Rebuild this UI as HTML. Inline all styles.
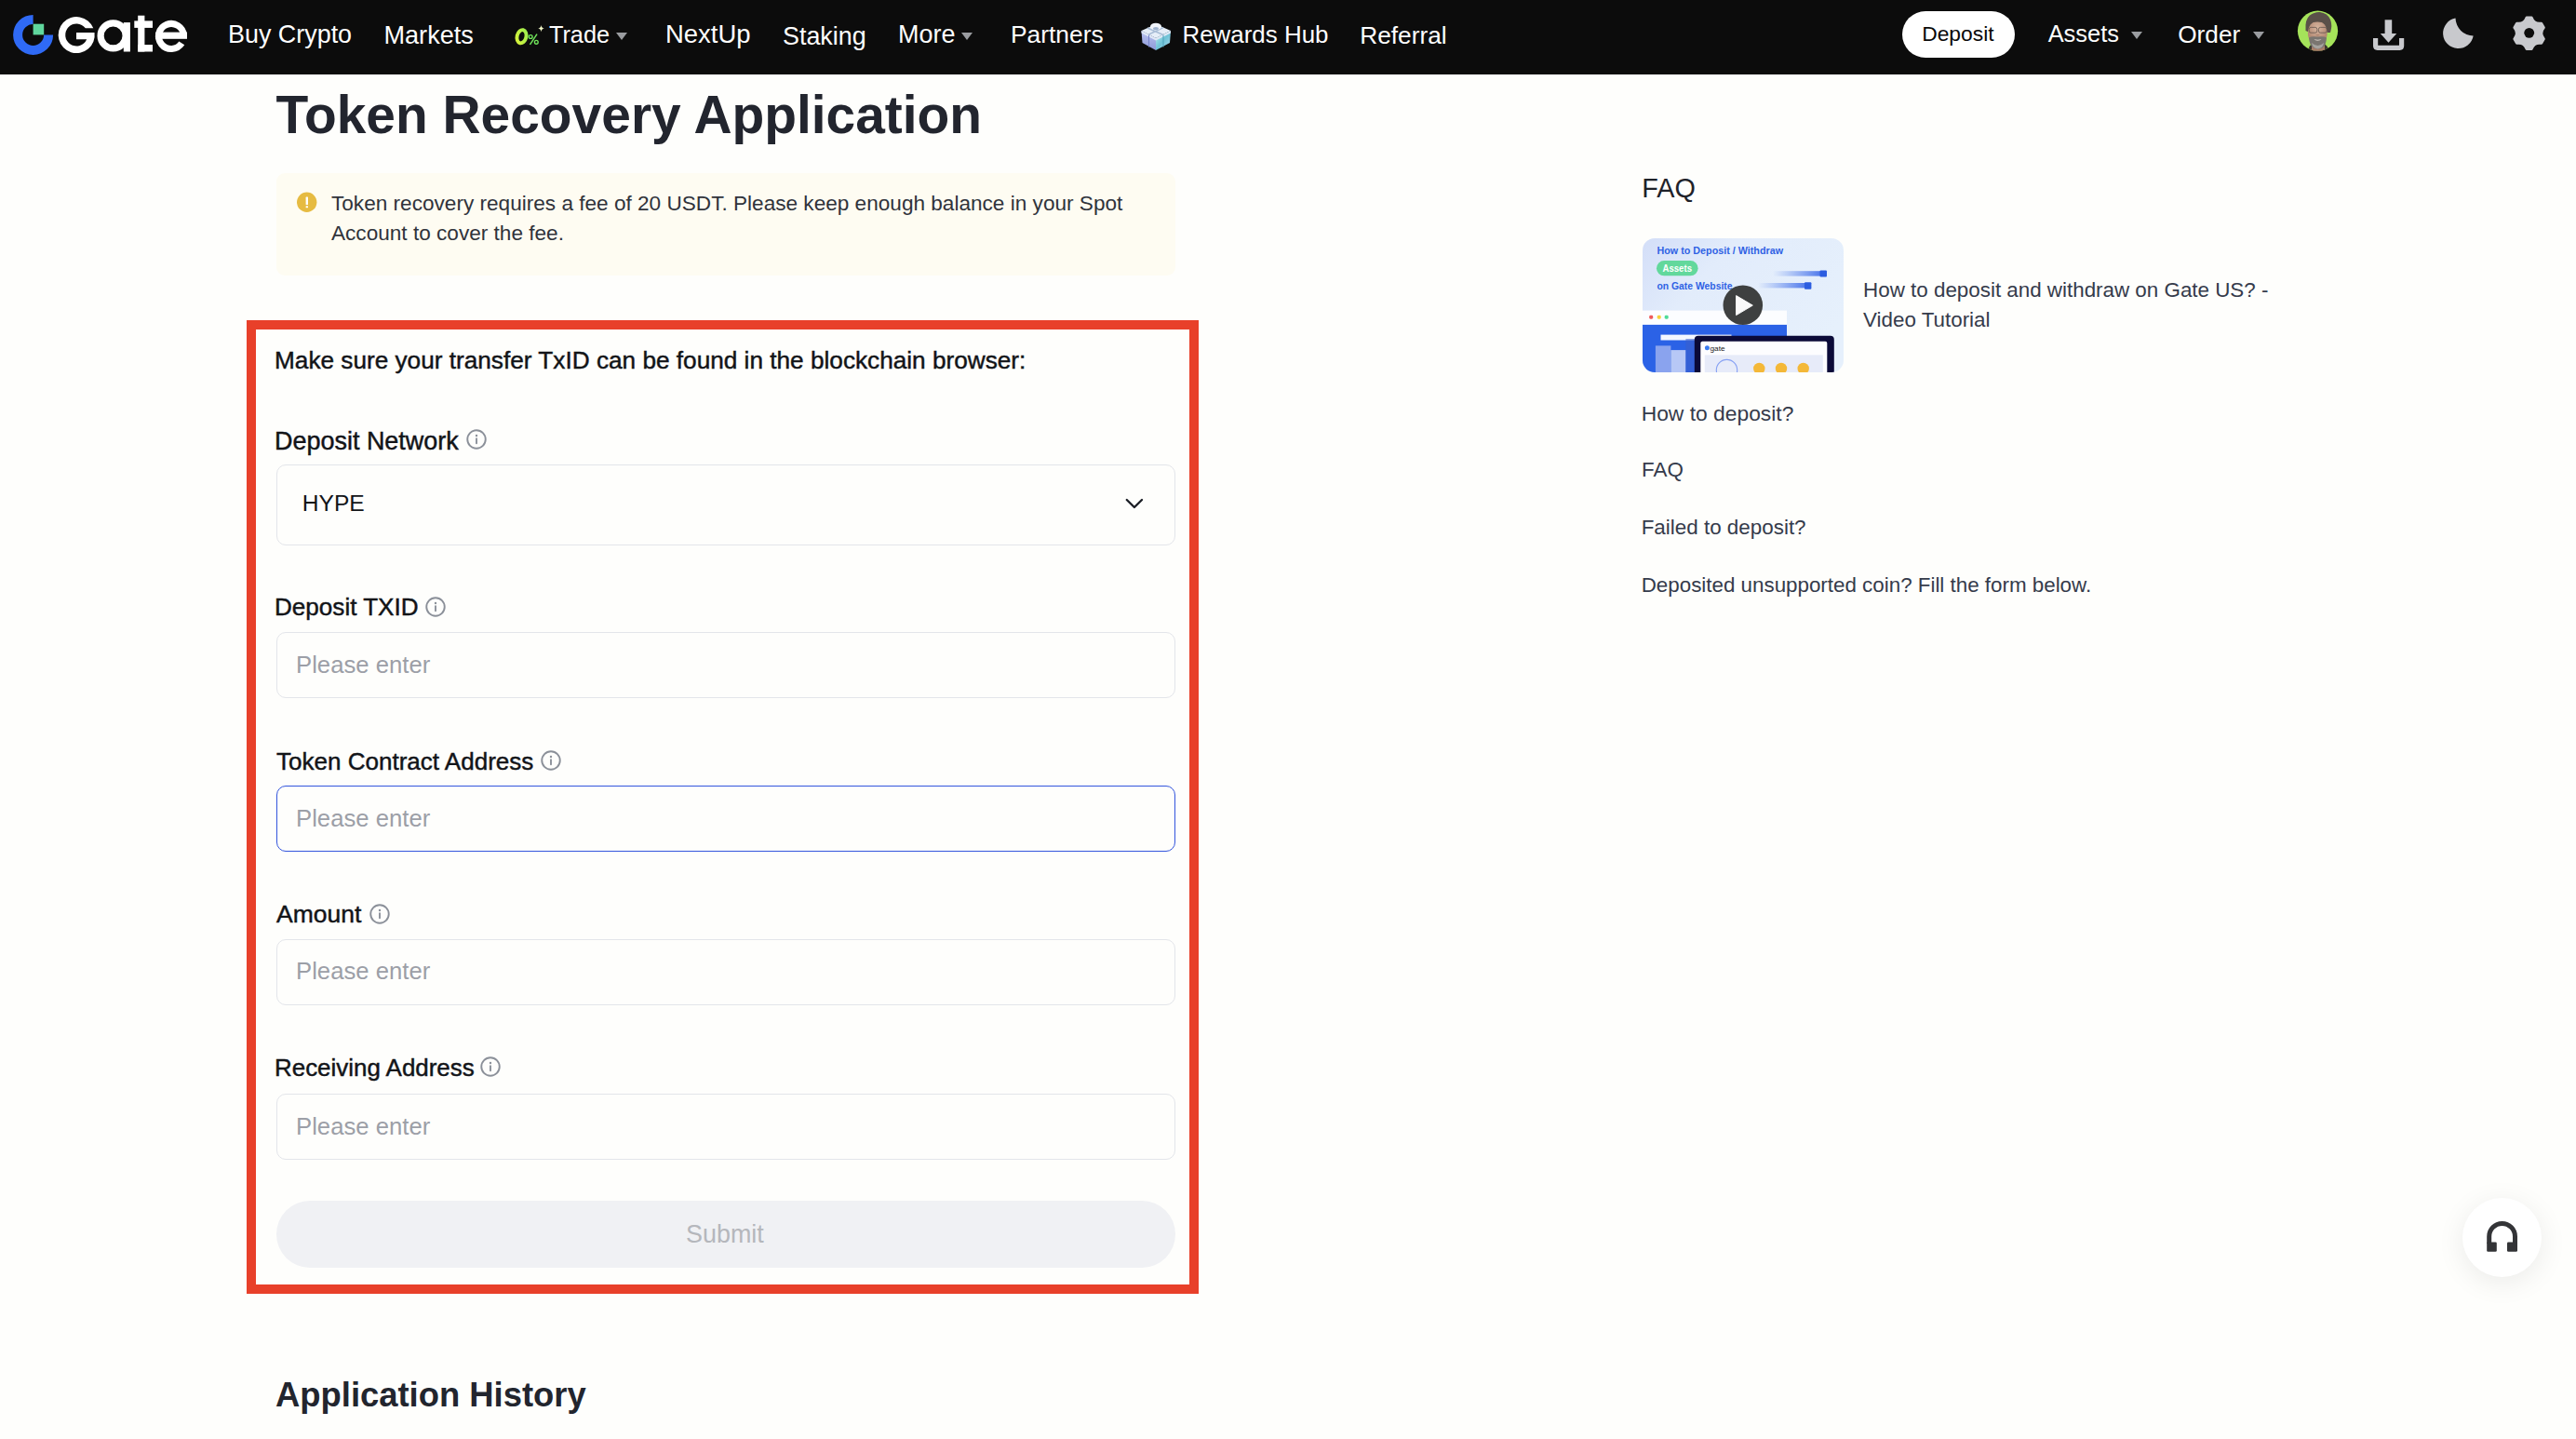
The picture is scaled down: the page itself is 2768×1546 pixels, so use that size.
<!DOCTYPE html>
<html>
<head>
<meta charset="utf-8">
<style>
html,body{margin:0;padding:0;}
body{width:2768px;height:1546px;overflow:hidden;position:relative;background:#fefefc;font-family:"Liberation Sans",sans-serif;}
.a{position:absolute;white-space:nowrap;line-height:1;}
#nav{position:absolute;left:0;top:0;width:2768px;height:80px;background:#0c0c0c;}
.nt{color:#fff;font-size:26.5px;}
.caret{position:absolute;width:0;height:0;border-left:6px solid transparent;border-right:6px solid transparent;border-top:8px solid #9a9ca0;}
.lbl{color:#121418;font-size:26px;-webkit-text-stroke:0.45px #121418;}
.inp{position:absolute;left:297px;width:966px;box-sizing:border-box;border:1.2px solid #e3e5ea;border-radius:10px;}
.ph{color:#9c9fa7;font-size:25.7px;}
.faq{color:#353b4b;font-size:22.5px;}
.info{position:absolute;width:21px;height:21px;}
</style>
</head>
<body>
<div id="nav">
  <!-- logo -->
  <svg class="a" style="left:0;top:0" width="220" height="80" viewBox="0 0 220 80">
    <path d="M35.6 15.9 A21.5 21.5 0 1 0 57.1 37.4 L47.1 37.4 A11.5 11.5 0 1 1 35.6 25.9 Z" fill="#2f6af5"/>
    <rect x="35.6" y="25.7" width="11.6" height="11.7" fill="#5fd69d"/>
    <g fill="#fff">
      <path d="M100.3 30.3 A19.5 19.5 0 1 0 101.54 35 L82 35 L82 42.3 L93.2 42.3 A12 12 0 1 1 91.8 30.3 Z"/>
      <circle cx="121.6" cy="38.45" r="13.5" fill="none" stroke="#fff" stroke-width="7.2"/>
      <rect x="132.8" y="24.1" width="7.1" height="31.4"/>
      <rect x="148.2" y="16.7" width="7.2" height="38.8"/>
      <rect x="144.3" y="22.4" width="19.7" height="7.5"/>
      <rect x="148.2" y="48.1" width="15.8" height="7.4"/>
      <path d="M197.5 38.2 A13.5 13.5 0 1 0 195.3 46.4" fill="none" stroke="#fff" stroke-width="7.1"/>
      <rect x="167.2" y="34.6" width="33.8" height="7.2"/>
    </g>
  </svg>
  <!-- 0% -->
  <svg class="a" style="left:550px;top:24px" width="40" height="28" viewBox="0 0 40 28">
    <defs><linearGradient id="zg" x1="0" y1="1" x2="1" y2="0"><stop offset="0" stop-color="#d9f23a"/><stop offset="1" stop-color="#9cef4f"/></linearGradient></defs>
    <ellipse cx="10.5" cy="15.25" rx="4.9" ry="7.2" transform="rotate(14 10.5 15.25)" fill="none" stroke="url(#zg)" stroke-width="3.9"/>
    <path d="M19.5 23.8 L27 12.6" stroke="#6fe35a" stroke-width="1.5"/>
    <circle cx="20.2" cy="15.5" r="1.9" fill="none" stroke="#6fe35a" stroke-width="1.4"/>
    <circle cx="26.3" cy="21.3" r="1.9" fill="none" stroke="#6fe35a" stroke-width="1.4"/>
    <path d="M31.5 3 Q32 6.2 34.8 6.6 Q32 7 31.5 10.2 Q31 7 28.2 6.6 Q31 6.2 31.5 3Z" fill="#f2f7c8"/>
  </svg>
  <div id="t_buy" class="a nt" style="left:245.0px;top:24.4px;font-size:26.91px;">Buy Crypto</div>
  <div id="t_markets" class="a nt" style="left:412.5px;top:24.4px;font-size:27.08px;">Markets</div>
  <div id="t_trade" class="a nt" style="left:589.9px;top:25.4px;font-size:25.35px;">Trade</div>
  <div class="caret" style="left:662px;top:35px;"></div>
  <div id="t_nextup" class="a nt" style="left:715.0px;top:23.4px;font-size:27.44px;">NextUp</div>
  <div id="t_staking" class="a nt" style="left:841.0px;top:25.5px;font-size:26.88px;">Staking</div>
  <div id="t_more" class="a nt" style="left:965.0px;top:24.4px;font-size:26.96px;">More</div>
  <div class="caret" style="left:1033px;top:35px;"></div>
  <div id="t_partners" class="a nt" style="left:1086.0px;top:23.5px;font-size:26.36px;">Partners</div>
  <div id="t_rewards" class="a nt" style="left:1270.5px;top:24.6px;font-size:25.91px;">Rewards Hub</div>
  <div id="t_referral" class="a nt" style="left:1461.2px;top:24.5px;font-size:26.28px;">Referral</div>

  <div class="a" style="left:2044px;top:12px;width:121px;height:50px;border-radius:25px;background:#fff;"></div>
  <div id="t_deposit" class="a" style="left:2065.2px;top:25.0px;color:#0a0a0a;font-size:22.82px;">Deposit</div>
  <div id="t_assets" class="a nt" style="left:2200.7px;top:24.0px;font-size:25.40px;">Assets</div>
  <div class="caret" style="left:2290px;top:34px;"></div>
  <div id="t_order" class="a nt" style="left:2340.2px;top:23.6px;font-size:26.22px;">Order</div>
  <div class="caret" style="left:2421px;top:34px;"></div>

  <!-- gift -->
  <svg class="a" style="left:1224px;top:22px" width="36" height="33" viewBox="0 0 36 33">
    <defs>
      <linearGradient id="gl" x1="0" y1="0" x2="0" y2="1"><stop offset="0" stop-color="#b9c2f0"/><stop offset="1" stop-color="#8e9ad8"/></linearGradient>
      <linearGradient id="gr" x1="0" y1="0" x2="1" y2="1"><stop offset="0" stop-color="#c9f2f2"/><stop offset="0.5" stop-color="#6fc3d6"/><stop offset="1" stop-color="#a9d8ee"/></linearGradient>
    </defs>
    <polygon points="2.5,11 18,4 34,11 18,19" fill="#e6eef8"/>
    <polygon points="2.5,11 18,19 18,32 3.5,24" fill="url(#gl)"/>
    <polygon points="18,19 34,11 33,24 18,32" fill="url(#gr)"/>
    <polygon points="2.5,11 18,19 34,11 34,13.5 18,21.5 2.5,13.5" fill="#dfe8f6"/>
    <path d="M10.5 15.5 L10.5 28.5" stroke="#7583c9" stroke-width="1"/>
    <path d="M26 15.5 L26 28.5" stroke="#4f9fb8" stroke-width="1"/>
    <path d="M9 8 L26 15.5 M26 7.5 L10.5 15" stroke="#a9bdd6" stroke-width="1.6"/>
    <ellipse cx="18" cy="6.5" rx="6" ry="3.8" fill="#f2f5fb"/>
    <ellipse cx="18" cy="8.5" rx="3" ry="1.6" fill="#9fb3cf"/>
  </svg>
  <!-- avatar -->
  <svg class="a" style="left:2468px;top:11px" width="45" height="45" viewBox="0 0 45 45">
    <defs><clipPath id="av"><circle cx="22.5" cy="22.2" r="21.6"/></clipPath>
    <radialGradient id="skin" cx="0.5" cy="0.3" r="0.7"><stop offset="0" stop-color="#d6b59f"/><stop offset="1" stop-color="#a87a64"/></radialGradient></defs>
    <circle cx="22.5" cy="22.2" r="21.6" fill="#a5e35a"/>
    <g clip-path="url(#av)">
      <path d="M12 46 Q12 38 17 36 L29 36 Q34 38 35 46 Z" fill="#3c382e"/>
      <path d="M16 36 Q22 44 30 36 L30 46 L16 46 Z" fill="#a97d68"/>
      <path d="M9.5 22 Q8.5 10 14 5.5 Q19 1.5 25 2 Q33 3 36 10 Q38.5 16 36 24 L31 24 L14 24 Z" fill="#5a5049"/>
      <ellipse cx="22.3" cy="24.5" rx="10.4" ry="13" fill="url(#skin)"/>
      <path d="M12 19 Q12.5 12 16.5 11 Q22 9.5 28 11 Q33 12.5 33.5 19 Q31 13.5 27 13 Q22 12 17.5 13 Q13.5 14 12 19 Z" fill="#5a5049"/>
      <path d="M13 29.5 Q13.5 38 18 40.5 Q22.5 42.5 27.5 40.5 Q31.5 38 32 29.5 Q29 27.5 22.3 28.5 Q15.5 27.5 13 29.5 Z" fill="#7a7570"/>
      <path d="M16 35 Q22.5 41 29 35 Q28.5 40.5 22.5 41.5 Q16.5 40.5 16 35Z" fill="#a6a39f"/>
      <path d="M18.5 31 Q22.5 32.4 26.5 31 Q25.5 32.8 22.4 32.8 Q19.4 32.8 18.5 31Z" fill="#d9cfc8"/>
      <path d="M20 26 Q22.3 29 24.6 26" fill="#b08670"/>
      <rect x="13.2" y="18.4" width="8.6" height="5.8" rx="2" fill="none" stroke="#5a4f48" stroke-width="0.9" opacity="0.8"/>
      <rect x="23.4" y="18.4" width="8.8" height="5.8" rx="2" fill="none" stroke="#5a4f48" stroke-width="0.9" opacity="0.8"/>
    </g>
  </svg>
  <!-- download -->
  <svg class="a" style="left:2548px;top:19px" width="38" height="38" viewBox="0 0 38 38">
    <path d="M4.6 21.9 V30.3 Q4.6 32.3 6.6 32.3 H30.6 Q32.6 32.3 32.6 30.3 V21.9" fill="none" stroke="#c8c9cd" stroke-width="5.2"/>
    <rect x="14.6" y="2.3" width="7.6" height="15" fill="#c8c9cd"/>
    <polygon points="9.8,16.9 27.3,16.9 18.5,26.8" fill="#c8c9cd"/>
  </svg>
  <!-- moon -->
  <svg class="a" style="left:2622px;top:16px" width="40" height="40" viewBox="0 0 40 40">
    <path d="M16.5 3.58 A16.4 16.4 0 1 0 35.66 22.5 A19.5 19.5 0 0 1 16.5 3.58 Z" fill="#c8c9cd"/>
  </svg>
  <!-- gear -->
  <svg class="a" style="left:2697px;top:15px" width="41" height="41" viewBox="0 0 41 41">
    <path fill="#c8c9cd" stroke="#c8c9cd" stroke-width="3" stroke-linejoin="round" d="M18.00 4.05 L23.20 4.05 Q25.92 11.54 33.76 10.15 L36.36 14.65 Q31.24 20.75 36.36 26.85 L33.76 31.35 Q25.92 29.96 23.20 37.45 L18.00 37.45 Q15.28 29.96 7.44 31.35 L4.84 26.85 Q9.96 20.75 4.84 14.65 L7.44 10.15 Q15.28 11.54 18.00 4.05 Z"/>
    <circle cx="20.7" cy="20.35" r="5.4" fill="#0c0c0c"/>
  </svg>
</div>

<!-- title -->
<div id="t_title" class="a" style="left:296.4px;top:95.0px;color:#22252e;font-size:56.90px;font-weight:bold;">Token Recovery Application</div>

<!-- alert -->
<div class="a" style="left:297px;top:186px;width:966px;height:110px;background:#fefcf2;border-radius:9px;"></div>
<svg class="a" style="left:317px;top:205px" width="26" height="26" viewBox="0 0 26 26"><circle cx="12.7" cy="12.2" r="10.7" fill="#e6bb42"/><rect x="11.6" y="6.6" width="2.4" height="8.4" rx="0.6" fill="#fff"/><rect x="11.6" y="16.3" width="2.4" height="1.9" rx="0.5" fill="#fff"/></svg>
<div id="t_alert" class="a" style="left:356.0px;top:203.0px;color:#30333b;font-size:22.60px;line-height:31.6px;">Token recovery requires a fee of 20 USDT. Please keep enough balance in your Spot<br>Account to cover the fee.</div>

<!-- red frame -->
<div class="a" style="left:265px;top:344px;width:1023px;height:1046px;box-sizing:border-box;border:10px solid #e8402a;"></div>

<div id="t_make" class="a lbl" style="left:295.0px;top:373.6px;font-size:26.20px;">Make sure your transfer TxID can be found in the blockchain browser:</div>

<div id="t_depnet" class="a lbl" style="left:295.0px;top:461.0px;font-size:26.96px;">Deposit Network</div>
<div class="inp" style="top:499px;height:87px;"></div>
<div id="t_hype" class="a" style="left:324.8px;top:529.4px;color:#121418;font-size:24.60px;">HYPE</div>

<div id="t_txid" class="a lbl" style="left:295.0px;top:639.2px;font-size:26.09px;">Deposit TXID</div>
<div class="inp" style="top:679px;height:71px;"></div>
<div id="t_ph1" class="a ph" style="left:318.0px;top:701.8px;font-size:25.70px;">Please enter</div>

<div id="t_tca" class="a lbl" style="left:297.0px;top:804.5px;font-size:26.04px;">Token Contract Address</div>
<div class="inp" style="top:844px;height:71px;border-color:#3355dd;"></div>
<div id="t_ph2" class="a ph" style="left:318.0px;top:866.8px;font-size:25.70px;">Please enter</div>

<div id="t_amount" class="a lbl" style="left:297.0px;top:968.9px;font-size:26.51px;">Amount</div>
<div class="inp" style="top:1009px;height:71px;"></div>
<div id="t_ph3" class="a ph" style="left:318.0px;top:1031.4px;font-size:25.70px;">Please enter</div>

<div id="t_recv" class="a lbl" style="left:295.0px;top:1135.0px;font-size:25.93px;">Receiving Address</div>
<div class="inp" style="top:1175px;height:71px;"></div>
<div id="t_ph4" class="a ph" style="left:318.0px;top:1198.0px;font-size:25.70px;">Please enter</div>

<div class="a" style="left:297px;top:1290px;width:966px;height:72px;border-radius:36px;background:#f0f1f4;"></div>
<div id="t_submit" class="a" style="left:737.0px;top:1313.0px;color:#b5b7bc;font-size:26.93px;">Submit</div>

<div id="t_apphist" class="a" style="left:296.0px;top:1481.0px;color:#22252e;font-size:36.41px;font-weight:bold;">Application History</div>

<!-- info icons -->
<svg class="a" style="left:499.8px;top:459.8px" width="24" height="24" viewBox="0 0 24 24"><circle cx="12" cy="12" r="9.75" fill="none" stroke="#8b9099" stroke-width="1.9"/><circle cx="12" cy="8" r="1.2" fill="#8b9099"/><path d="M12 11.2 V16.2" stroke="#8b9099" stroke-width="1.9" stroke-linecap="round"/></svg>
<svg class="a" style="left:455.5px;top:639.6px" width="24" height="24" viewBox="0 0 24 24"><circle cx="12" cy="12" r="9.75" fill="none" stroke="#8b9099" stroke-width="1.9"/><circle cx="12" cy="8" r="1.2" fill="#8b9099"/><path d="M12 11.2 V16.2" stroke="#8b9099" stroke-width="1.9" stroke-linecap="round"/></svg>
<svg class="a" style="left:579.8px;top:804.7px" width="24" height="24" viewBox="0 0 24 24"><circle cx="12" cy="12" r="9.75" fill="none" stroke="#8b9099" stroke-width="1.9"/><circle cx="12" cy="8" r="1.2" fill="#8b9099"/><path d="M12 11.2 V16.2" stroke="#8b9099" stroke-width="1.9" stroke-linecap="round"/></svg>
<svg class="a" style="left:395.8px;top:969.7px" width="24" height="24" viewBox="0 0 24 24"><circle cx="12" cy="12" r="9.75" fill="none" stroke="#8b9099" stroke-width="1.9"/><circle cx="12" cy="8" r="1.2" fill="#8b9099"/><path d="M12 11.2 V16.2" stroke="#8b9099" stroke-width="1.9" stroke-linecap="round"/></svg>
<svg class="a" style="left:515.2px;top:1134.4px" width="24" height="24" viewBox="0 0 24 24"><circle cx="12" cy="12" r="9.75" fill="none" stroke="#8b9099" stroke-width="1.9"/><circle cx="12" cy="8" r="1.2" fill="#8b9099"/><path d="M12 11.2 V16.2" stroke="#8b9099" stroke-width="1.9" stroke-linecap="round"/></svg>
<svg class="a" style="left:1205px;top:528px" width="28" height="24" viewBox="0 0 28 24"><path d="M5.8 9 L13.9 17 L22 9" fill="none" stroke="#1c1f26" stroke-width="2.4" stroke-linecap="round" stroke-linejoin="round"/></svg>

<!-- FAQ -->
<div id="t_faqh" class="a" style="left:1764.2px;top:188.2px;color:#1f2229;font-size:28.80px;">FAQ</div>
<svg class="a" style="left:1765px;top:256px" width="216" height="144" viewBox="0 0 216 144">
  <defs>
    <clipPath id="thc"><rect x="0" y="0" width="216" height="144" rx="13" ry="13"/></clipPath>
    <linearGradient id="thbg" x1="0" y1="0" x2="1" y2="0.6"><stop offset="0" stop-color="#d3def8"/><stop offset="0.35" stop-color="#e2ecfb"/><stop offset="1" stop-color="#e6f0fc"/></linearGradient>
    <linearGradient id="bar" x1="0" y1="0" x2="1" y2="0"><stop offset="0" stop-color="#5d86ee" stop-opacity="0"/><stop offset="1" stop-color="#4672ea" stop-opacity="0.95"/></linearGradient>
  </defs>
  <g clip-path="url(#thc)">
    <rect width="216" height="144" fill="url(#thbg)"/>
    <text x="15.5" y="17" font-family="Liberation Sans" font-weight="bold" font-size="11.5" fill="#2f62e4" textLength="135.5" lengthAdjust="spacingAndGlyphs">How to Deposit / Withdraw</text>
    <rect x="15" y="24" width="44.6" height="16.3" rx="8.15" fill="#62d89c"/>
    <text x="21.5" y="36.3" font-family="Liberation Sans" font-weight="bold" font-size="11" fill="#ffffff" textLength="31.5" lengthAdjust="spacingAndGlyphs">Assets</text>
    <text x="15.5" y="54.6" font-family="Liberation Sans" font-weight="bold" font-size="11.5" fill="#2f62e4" textLength="81" lengthAdjust="spacingAndGlyphs">on Gate Website</text>
    <rect x="140" y="35.2" width="52" height="5.4" fill="url(#bar)"/>
    <rect x="190.5" y="34.4" width="7.5" height="7" rx="1" fill="#2c5de0"/>
    <rect x="124" y="48" width="52" height="5.4" fill="url(#bar)"/>
    <rect x="174" y="47.3" width="7.4" height="7.4" rx="1" fill="#2c5de0"/>
    <rect x="0" y="77.6" width="155" height="15.3" fill="#fcfdff"/>
    <rect x="7.2" y="82.7" width="4" height="4" rx="1.4" fill="#ef5a5a"/>
    <rect x="15.7" y="82.7" width="4" height="4" rx="1.4" fill="#f7d23c"/>
    <rect x="23.7" y="82.7" width="4" height="4" rx="1.4" fill="#4fdc98"/>
    <rect x="0" y="92.9" width="155" height="51.1" fill="#2b62e6"/>
    <rect x="19.5" y="103.6" width="76" height="5.9" fill="#f4f7ff"/>
    <rect x="13.9" y="115.4" width="16.5" height="28.6" fill="#8aa3ee"/>
    <rect x="30.4" y="120.1" width="16" height="23.9" fill="#b7c8f6"/>
    <rect x="46.4" y="108" width="10" height="36" fill="#3d5fc8" opacity="0.55"/>
    <rect x="55.8" y="104.8" width="150" height="45" rx="4" fill="#0b0a38"/>
    <rect x="62.3" y="110.7" width="136" height="40" rx="2" fill="#fdfdff"/>
    <circle cx="69.4" cy="117.8" r="2.5" fill="#3a7bf0"/>
    <text x="72.5" y="120.8" font-family="Liberation Sans" font-size="7.5" fill="#222" textLength="16" lengthAdjust="spacingAndGlyphs">gate</text>
    <rect x="66.8" y="125.4" width="127" height="20" fill="#e7ebf9"/>
    <circle cx="90.5" cy="141.6" r="11.2" fill="none" stroke="#86a0f3" stroke-width="1.1"/>
    <circle cx="125.3" cy="140" r="6.2" fill="#f4b838"/>
    <circle cx="149" cy="140" r="6.2" fill="#f4b838"/>
    <circle cx="172.7" cy="140" r="6.2" fill="#f4b838"/>
    <circle cx="107.8" cy="71.8" r="21.3" fill="#3e4040"/>
    <path d="M100.6 61.6 L100.6 82.6 L118.3 72.1 Z" fill="#fafafa" stroke="#fafafa" stroke-width="1" stroke-linejoin="round"/>
  </g>
</svg>
<div id="t_vid" class="a faq" style="left:2002.1px;top:296.1px;line-height:31.6px;font-size:22.38px;">How to deposit and withdraw on Gate US? -<br>Video Tutorial</div>
<div id="t_how" class="a faq" style="left:1763.7px;top:432.6px;font-size:22.84px;">How to deposit?</div>
<div id="t_faq2" class="a faq" style="left:1764px;top:494px;font-size:22.4px;">FAQ</div>
<div id="t_fail" class="a faq" style="left:1763.7px;top:556.0px;font-size:22.42px;">Failed to deposit?</div>
<div id="t_dep" class="a faq" style="left:1763.7px;top:618.1px;font-size:22.37px;">Deposited unsupported coin? Fill the form below.</div>

<!-- support -->
<div class="a" style="left:2646px;top:1287px;width:85px;height:85px;border-radius:50%;background:#ffffff;box-shadow:0 6px 30px rgba(0,0,0,0.08);"></div>
<svg class="a" style="left:2664px;top:1304px" width="50" height="50" viewBox="0 0 50 50"><path d="M10.7 32 V24.4 A13.9 13.9 0 0 1 38.5 24.4 V32" fill="none" stroke="#333437" stroke-width="5"/><rect x="8.2" y="30.5" width="10.6" height="10.3" rx="1.3" fill="#333437"/><rect x="30" y="30.5" width="11" height="10.3" rx="1.3" fill="#333437"/></svg>
</body>
</html>
